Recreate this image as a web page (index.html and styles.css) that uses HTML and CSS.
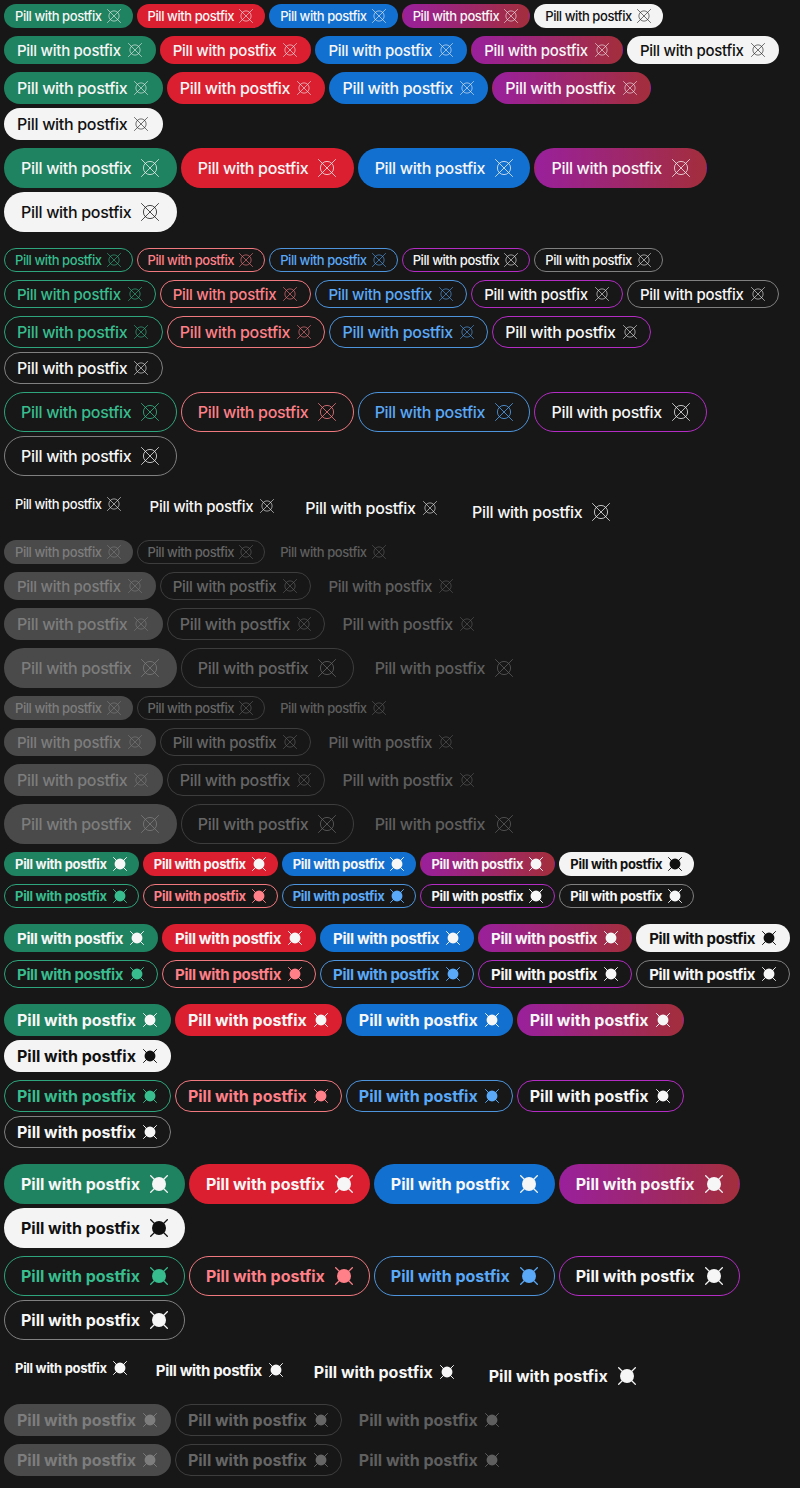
FILE: index.html
```html
<!DOCTYPE html>
<html lang="en">
<head>
    <meta charset="UTF-8">
    <meta name="viewport" content="width=device-width, initial-scale=1.0">
    <title>Pill with postfix</title>
    <link rel="stylesheet" href="styles.css">
</head>
<body>
    <svg class="defs" width="0" height="0" aria-hidden="true">
        <symbol id="x-line" viewBox="0 0 18 18">
            <circle cx="9" cy="9" r="6.6" fill="none" stroke="currentColor" stroke-width=".75"/>
            <path d="M.2.2 17.8 17.8M17.8.2.2 17.8" fill="none" stroke="currentColor" stroke-width=".75"/>
        </symbol>
        <symbol id="x-solid" viewBox="0 0 18 18">
            <circle cx="9" cy="9" r="7" fill="currentColor"/>
            <path d="M.3.3 17.7 17.7M17.7.3.3 17.7" fill="none" stroke="currentColor" stroke-width="1.25"/>
        </symbol>
    </svg>

    <div class="stack">
        <div class="row">
            <span class="pill xs green">Pill with postfix<svg class="ico"><use href="#x-line"/></svg></span>
            <span class="pill xs red">Pill with postfix<svg class="ico"><use href="#x-line"/></svg></span>
            <span class="pill xs blue">Pill with postfix<svg class="ico"><use href="#x-line"/></svg></span>
            <span class="pill xs grad">Pill with postfix<svg class="ico"><use href="#x-line"/></svg></span>
            <span class="pill xs white">Pill with postfix<svg class="ico"><use href="#x-line"/></svg></span>
        </div>
        <div class="row">
            <span class="pill sm green">Pill with postfix<svg class="ico"><use href="#x-line"/></svg></span>
            <span class="pill sm red">Pill with postfix<svg class="ico"><use href="#x-line"/></svg></span>
            <span class="pill sm blue">Pill with postfix<svg class="ico"><use href="#x-line"/></svg></span>
            <span class="pill sm grad">Pill with postfix<svg class="ico"><use href="#x-line"/></svg></span>
            <span class="pill sm white">Pill with postfix<svg class="ico"><use href="#x-line"/></svg></span>
        </div>
        <div class="row">
            <span class="pill md green">Pill with postfix<svg class="ico"><use href="#x-line"/></svg></span>
            <span class="pill md red">Pill with postfix<svg class="ico"><use href="#x-line"/></svg></span>
            <span class="pill md blue">Pill with postfix<svg class="ico"><use href="#x-line"/></svg></span>
            <span class="pill md grad">Pill with postfix<svg class="ico"><use href="#x-line"/></svg></span>
            <span class="pill md white">Pill with postfix<svg class="ico"><use href="#x-line"/></svg></span>
        </div>
        <div class="row">
            <span class="pill lg green">Pill with postfix<svg class="ico"><use href="#x-line"/></svg></span>
            <span class="pill lg red">Pill with postfix<svg class="ico"><use href="#x-line"/></svg></span>
            <span class="pill lg blue">Pill with postfix<svg class="ico"><use href="#x-line"/></svg></span>
            <span class="pill lg grad">Pill with postfix<svg class="ico"><use href="#x-line"/></svg></span>
            <span class="pill lg white">Pill with postfix<svg class="ico"><use href="#x-line"/></svg></span>
        </div>
    </div>

    <div class="stack spaced">
        <div class="row">
            <span class="pill xs outline o-green">Pill with postfix<svg class="ico"><use href="#x-line"/></svg></span>
            <span class="pill xs outline o-red">Pill with postfix<svg class="ico"><use href="#x-line"/></svg></span>
            <span class="pill xs outline o-blue">Pill with postfix<svg class="ico"><use href="#x-line"/></svg></span>
            <span class="pill xs outline o-purple">Pill with postfix<svg class="ico"><use href="#x-line"/></svg></span>
            <span class="pill xs outline o-white">Pill with postfix<svg class="ico"><use href="#x-line"/></svg></span>
        </div>
        <div class="row">
            <span class="pill sm outline o-green">Pill with postfix<svg class="ico"><use href="#x-line"/></svg></span>
            <span class="pill sm outline o-red">Pill with postfix<svg class="ico"><use href="#x-line"/></svg></span>
            <span class="pill sm outline o-blue">Pill with postfix<svg class="ico"><use href="#x-line"/></svg></span>
            <span class="pill sm outline o-purple">Pill with postfix<svg class="ico"><use href="#x-line"/></svg></span>
            <span class="pill sm outline o-white">Pill with postfix<svg class="ico"><use href="#x-line"/></svg></span>
        </div>
        <div class="row">
            <span class="pill md outline o-green">Pill with postfix<svg class="ico"><use href="#x-line"/></svg></span>
            <span class="pill md outline o-red">Pill with postfix<svg class="ico"><use href="#x-line"/></svg></span>
            <span class="pill md outline o-blue">Pill with postfix<svg class="ico"><use href="#x-line"/></svg></span>
            <span class="pill md outline o-purple">Pill with postfix<svg class="ico"><use href="#x-line"/></svg></span>
            <span class="pill md outline o-white">Pill with postfix<svg class="ico"><use href="#x-line"/></svg></span>
        </div>
        <div class="row">
            <span class="pill lg outline o-green">Pill with postfix<svg class="ico"><use href="#x-line"/></svg></span>
            <span class="pill lg outline o-red">Pill with postfix<svg class="ico"><use href="#x-line"/></svg></span>
            <span class="pill lg outline o-blue">Pill with postfix<svg class="ico"><use href="#x-line"/></svg></span>
            <span class="pill lg outline o-purple">Pill with postfix<svg class="ico"><use href="#x-line"/></svg></span>
            <span class="pill lg outline o-white">Pill with postfix<svg class="ico"><use href="#x-line"/></svg></span>
        </div>
    </div>

    <div class="stack spaced">
        <div class="row">
            <span class="pill xs ghost">Pill with postfix<svg class="ico"><use href="#x-line"/></svg></span>
            <span class="pill sm ghost">Pill with postfix<svg class="ico"><use href="#x-line"/></svg></span>
            <span class="pill md ghost">Pill with postfix<svg class="ico"><use href="#x-line"/></svg></span>
            <span class="pill lg ghost">Pill with postfix<svg class="ico"><use href="#x-line"/></svg></span>
        </div>

        <div class="row">
            <span class="pill xs off-solid">Pill with postfix<svg class="ico"><use href="#x-line"/></svg></span>
            <span class="pill xs off-outline">Pill with postfix<svg class="ico"><use href="#x-line"/></svg></span>
            <span class="pill xs off-ghost">Pill with postfix<svg class="ico"><use href="#x-line"/></svg></span>
        </div>
        <div class="row">
            <span class="pill sm off-solid">Pill with postfix<svg class="ico"><use href="#x-line"/></svg></span>
            <span class="pill sm off-outline">Pill with postfix<svg class="ico"><use href="#x-line"/></svg></span>
            <span class="pill sm off-ghost">Pill with postfix<svg class="ico"><use href="#x-line"/></svg></span>
        </div>
        <div class="row">
            <span class="pill md off-solid">Pill with postfix<svg class="ico"><use href="#x-line"/></svg></span>
            <span class="pill md off-outline">Pill with postfix<svg class="ico"><use href="#x-line"/></svg></span>
            <span class="pill md off-ghost">Pill with postfix<svg class="ico"><use href="#x-line"/></svg></span>
        </div>
        <div class="row">
            <span class="pill lg off-solid">Pill with postfix<svg class="ico"><use href="#x-line"/></svg></span>
            <span class="pill lg off-outline">Pill with postfix<svg class="ico"><use href="#x-line"/></svg></span>
            <span class="pill lg off-ghost">Pill with postfix<svg class="ico"><use href="#x-line"/></svg></span>
        </div>

        <div class="row">
            <span class="pill xs off-solid">Pill with postfix<svg class="ico"><use href="#x-line"/></svg></span>
            <span class="pill xs off-outline">Pill with postfix<svg class="ico"><use href="#x-line"/></svg></span>
            <span class="pill xs off-ghost">Pill with postfix<svg class="ico"><use href="#x-line"/></svg></span>
        </div>
        <div class="row">
            <span class="pill sm off-solid">Pill with postfix<svg class="ico"><use href="#x-line"/></svg></span>
            <span class="pill sm off-outline">Pill with postfix<svg class="ico"><use href="#x-line"/></svg></span>
            <span class="pill sm off-ghost">Pill with postfix<svg class="ico"><use href="#x-line"/></svg></span>
        </div>
        <div class="row">
            <span class="pill md off-solid">Pill with postfix<svg class="ico"><use href="#x-line"/></svg></span>
            <span class="pill md off-outline">Pill with postfix<svg class="ico"><use href="#x-line"/></svg></span>
            <span class="pill md off-ghost">Pill with postfix<svg class="ico"><use href="#x-line"/></svg></span>
        </div>
        <div class="row">
            <span class="pill lg off-solid">Pill with postfix<svg class="ico"><use href="#x-line"/></svg></span>
            <span class="pill lg off-outline">Pill with postfix<svg class="ico"><use href="#x-line"/></svg></span>
            <span class="pill lg off-ghost">Pill with postfix<svg class="ico"><use href="#x-line"/></svg></span>
        </div>

        <div class="row">
            <span class="pill strong xs green">Pill with postfix<svg class="ico"><use href="#x-solid"/></svg></span>
            <span class="pill strong xs red">Pill with postfix<svg class="ico"><use href="#x-solid"/></svg></span>
            <span class="pill strong xs blue">Pill with postfix<svg class="ico"><use href="#x-solid"/></svg></span>
            <span class="pill strong xs grad">Pill with postfix<svg class="ico"><use href="#x-solid"/></svg></span>
            <span class="pill strong xs white">Pill with postfix<svg class="ico"><use href="#x-solid"/></svg></span>
        </div>
        <div class="row">
            <span class="pill strong xs outline o-green">Pill with postfix<svg class="ico"><use href="#x-solid"/></svg></span>
            <span class="pill strong xs outline o-red">Pill with postfix<svg class="ico"><use href="#x-solid"/></svg></span>
            <span class="pill strong xs outline o-blue">Pill with postfix<svg class="ico"><use href="#x-solid"/></svg></span>
            <span class="pill strong xs outline o-purple">Pill with postfix<svg class="ico"><use href="#x-solid"/></svg></span>
            <span class="pill strong xs outline o-white">Pill with postfix<svg class="ico"><use href="#x-solid"/></svg></span>
        </div>
    </div>

    <div class="stack spaced">
        <div class="row">
            <span class="pill strong sm green">Pill with postfix<svg class="ico"><use href="#x-solid"/></svg></span>
            <span class="pill strong sm red">Pill with postfix<svg class="ico"><use href="#x-solid"/></svg></span>
            <span class="pill strong sm blue">Pill with postfix<svg class="ico"><use href="#x-solid"/></svg></span>
            <span class="pill strong sm grad">Pill with postfix<svg class="ico"><use href="#x-solid"/></svg></span>
            <span class="pill strong sm white">Pill with postfix<svg class="ico"><use href="#x-solid"/></svg></span>
        </div>
        <div class="row">
            <span class="pill strong sm outline o-green">Pill with postfix<svg class="ico"><use href="#x-solid"/></svg></span>
            <span class="pill strong sm outline o-red">Pill with postfix<svg class="ico"><use href="#x-solid"/></svg></span>
            <span class="pill strong sm outline o-blue">Pill with postfix<svg class="ico"><use href="#x-solid"/></svg></span>
            <span class="pill strong sm outline o-purple">Pill with postfix<svg class="ico"><use href="#x-solid"/></svg></span>
            <span class="pill strong sm outline o-white">Pill with postfix<svg class="ico"><use href="#x-solid"/></svg></span>
        </div>
    </div>

    <div class="stack spaced">
        <div class="row">
            <span class="pill strong md green">Pill with postfix<svg class="ico"><use href="#x-solid"/></svg></span>
            <span class="pill strong md red">Pill with postfix<svg class="ico"><use href="#x-solid"/></svg></span>
            <span class="pill strong md blue">Pill with postfix<svg class="ico"><use href="#x-solid"/></svg></span>
            <span class="pill strong md grad">Pill with postfix<svg class="ico"><use href="#x-solid"/></svg></span>
            <span class="pill strong md white">Pill with postfix<svg class="ico"><use href="#x-solid"/></svg></span>
        </div>
        <div class="row">
            <span class="pill strong md outline o-green">Pill with postfix<svg class="ico"><use href="#x-solid"/></svg></span>
            <span class="pill strong md outline o-red">Pill with postfix<svg class="ico"><use href="#x-solid"/></svg></span>
            <span class="pill strong md outline o-blue">Pill with postfix<svg class="ico"><use href="#x-solid"/></svg></span>
            <span class="pill strong md outline o-purple">Pill with postfix<svg class="ico"><use href="#x-solid"/></svg></span>
            <span class="pill strong md outline o-white">Pill with postfix<svg class="ico"><use href="#x-solid"/></svg></span>
        </div>
    </div>

    <div class="stack spaced">
        <div class="row">
            <span class="pill strong lg green">Pill with postfix<svg class="ico"><use href="#x-solid"/></svg></span>
            <span class="pill strong lg red">Pill with postfix<svg class="ico"><use href="#x-solid"/></svg></span>
            <span class="pill strong lg blue">Pill with postfix<svg class="ico"><use href="#x-solid"/></svg></span>
            <span class="pill strong lg grad">Pill with postfix<svg class="ico"><use href="#x-solid"/></svg></span>
            <span class="pill strong lg white">Pill with postfix<svg class="ico"><use href="#x-solid"/></svg></span>
        </div>
        <div class="row">
            <span class="pill strong lg outline o-green">Pill with postfix<svg class="ico"><use href="#x-solid"/></svg></span>
            <span class="pill strong lg outline o-red">Pill with postfix<svg class="ico"><use href="#x-solid"/></svg></span>
            <span class="pill strong lg outline o-blue">Pill with postfix<svg class="ico"><use href="#x-solid"/></svg></span>
            <span class="pill strong lg outline o-purple">Pill with postfix<svg class="ico"><use href="#x-solid"/></svg></span>
            <span class="pill strong lg outline o-white">Pill with postfix<svg class="ico"><use href="#x-solid"/></svg></span>
        </div>
    </div>

    <div class="stack spaced">
        <div class="row">
            <span class="pill strong xs ghost">Pill with postfix<svg class="ico"><use href="#x-solid"/></svg></span>
            <span class="pill strong sm ghost">Pill with postfix<svg class="ico"><use href="#x-solid"/></svg></span>
            <span class="pill strong md ghost">Pill with postfix<svg class="ico"><use href="#x-solid"/></svg></span>
            <span class="pill strong lg ghost">Pill with postfix<svg class="ico"><use href="#x-solid"/></svg></span>
        </div>
        <div class="row">
            <span class="pill strong md off-solid">Pill with postfix<svg class="ico"><use href="#x-solid"/></svg></span>
            <span class="pill strong md off-outline">Pill with postfix<svg class="ico"><use href="#x-solid"/></svg></span>
            <span class="pill strong md off-ghost">Pill with postfix<svg class="ico"><use href="#x-solid"/></svg></span>
        </div>
        <div class="row">
            <span class="pill strong md off-solid">Pill with postfix<svg class="ico"><use href="#x-solid"/></svg></span>
            <span class="pill strong md off-outline">Pill with postfix<svg class="ico"><use href="#x-solid"/></svg></span>
            <span class="pill strong md off-ghost">Pill with postfix<svg class="ico"><use href="#x-solid"/></svg></span>
        </div>
    </div>
</body>
</html>
```

FILE: styles.css
```css
body {
    font-family: Inter, "Liberation Sans", sans-serif;
    margin: 0;
    padding: 4px;
    height: 1480px;
    overflow: hidden;
    background: #171717;
}

.defs {
    position: absolute;
}

.stack {
    display: flex;
    flex-direction: column;
    gap: 8px;
}

.spaced {
    margin-top: 16px;
}

.row {
    display: flex;
    flex-wrap: wrap;
    align-items: flex-start;
    gap: 4px;
}

.pill {
    display: inline-flex;
    align-items: center;
    box-sizing: border-box;
    border: 1px solid transparent;
    font-weight: 450;
    white-space: nowrap;
}

/* margin-top cancels the bottom padding of the sizes so only the text moves up */
.ico {
    flex: none;
    width: 14px;
    height: 14px;
    margin-top: 1px;
}

/* sizes */
.xs {
    height: 24px;
    padding: 0 11px 1px 10px;
    border-radius: 12px;
    font-size: 13px;
    letter-spacing: -0.43px;
    gap: 5px;
}

.sm {
    height: 28px;
    padding: 0 13px 0 12px;
    border-radius: 14px;
    font-size: 15px;
    letter-spacing: -0.27px;
    gap: 7px;
}

.sm .ico {
    margin-top: 0;
}

.md {
    height: 32px;
    padding: 0 13.3px 1px 12px;
    border-radius: 16px;
    font-size: 16px;
    letter-spacing: -0.3px;
    gap: 7px;
}

.lg {
    height: 40px;
    padding: 0 16.4px 1px 16px;
    border-radius: 20px;
    font-size: 16px;
    letter-spacing: -0.3px;
    gap: 10px;
}

.lg .ico {
    width: 18px;
    height: 18px;
}

.strong {
    font-weight: 700;
}

.strong.xs {
    letter-spacing: -0.29px;
    gap: 6px;
}

.strong.sm {
    letter-spacing: -0.33px;
}

.strong.md {
    padding-right: 13px;
    letter-spacing: -0.01px;
}

.strong.lg {
    padding-right: 16px;
    letter-spacing: -0.01px;
}

/* solid */
.green { background: #1f8260; color: #f6f6f6; }
.red { background: #dc1f30; color: #f6f6f6; }
.blue { background: #1270d1; color: #f6f6f6; }
.grad { background: linear-gradient(90deg, #99209b, #a32e3c); color: #f6f6f6; }
.white { background: #f4f4f4; color: #111; }

/* outline */
.outline { background: transparent; }
.o-green { border-color: #2ea57c; color: #37bd8e; }
.o-red { border-color: #f0787f; color: #ff8088; }
.o-blue { border-color: #4d94dc; color: #5aa9f8; }
.o-purple { border-color: #b32cc4; color: #f6f6f6; }
.o-white { border-color: #808080; color: #f6f6f6; }

.ghost { background: transparent; color: #f6f6f6; }

/* disabled */
.off-solid { background: #4a4a4a; color: #7d7d7d; }
.off-outline { border-color: #3d3d3d; color: #666; }
.off-ghost { color: #5f5f5f; }
```
